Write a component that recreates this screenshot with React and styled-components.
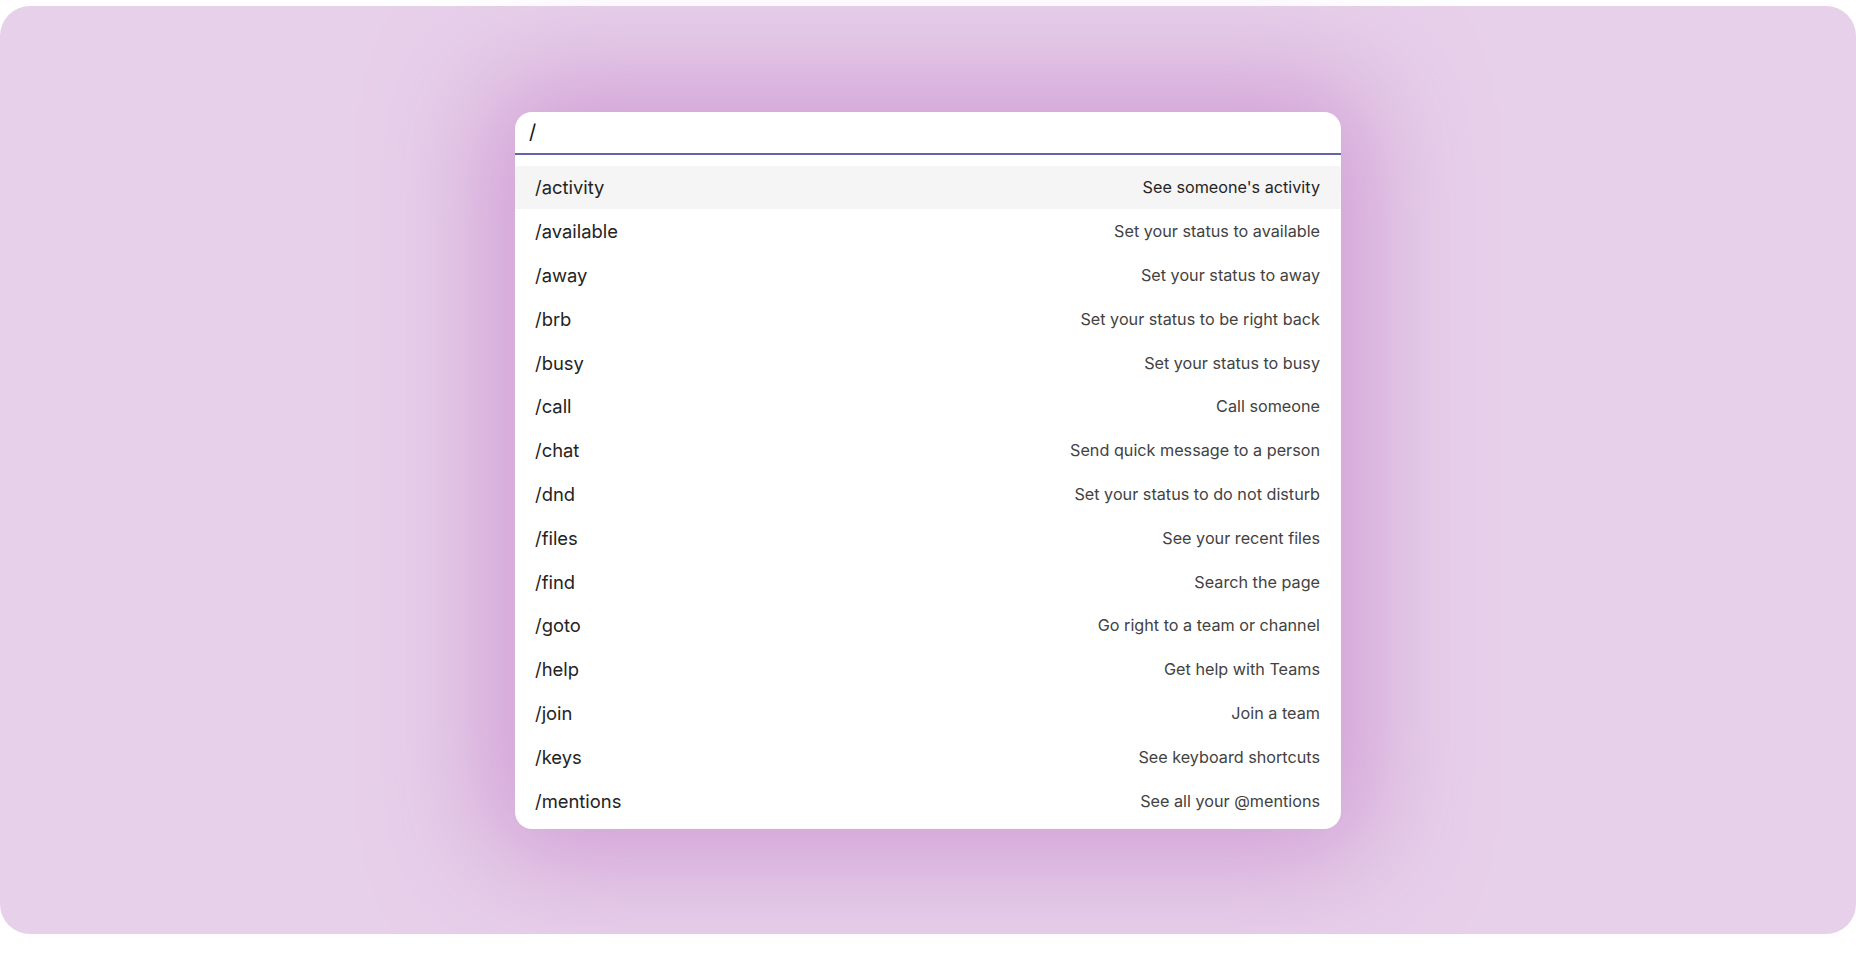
import React from 'react'
import styled, { createGlobalStyle } from 'styled-components'

const GlobalStyle = createGlobalStyle`
    html, body {
        margin: 0;
        padding: 0;
        background: #ffffff;
        font-family: Inter, "Noto Sans", sans-serif;
    }
`;

const Frame = styled.div`
    margin-top: 6px;
    height: 928px;
    border-radius: 30px;
    background: #e7d0ea;
    display: flex;
    align-items: center;
    justify-content: center;
`;

const Panel = styled.div`
    width: 826px;
    height: 717px;
    box-sizing: border-box;
    background: #ffffff;
    border-radius: 17px;
    overflow: hidden;
    display: flex;
    flex-direction: column;
    box-shadow: 0 0 110px 30px rgba(200, 140, 205, 0.75);
`;

const Input = styled.div`
    height: 41px;
    flex-shrink: 0;
    display: flex;
    align-items: center;
    padding: 0 14px;
    font-size: 20px;
    color: #111111;
    border-bottom: 2px solid #6264a7;
`;

const List = styled.div`
    display: flex;
    flex-direction: column;
    padding-top: 11px;
`;

const Row = styled.div`
    height: 43.8px;
    display: flex;
    align-items: center;
    justify-content: space-between;
    padding: 0 21px 0 20px;
    background: ${props => props.active ? '#f5f5f5' : 'transparent'};
`;

const Command = styled.span`
    font-size: 18.4px;
    color: #242424;
`;

const Hint = styled.span`
    font-size: 16.2px;
    color: ${props => props.active ? '#242424' : '#424242'};
`;

const commands = [
    ['/activity', "See someone's activity"],
    ['/available', 'Set your status to available'],
    ['/away', 'Set your status to away'],
    ['/brb', 'Set your status to be right back'],
    ['/busy', 'Set your status to busy'],
    ['/call', 'Call someone'],
    ['/chat', 'Send quick message to a person'],
    ['/dnd', 'Set your status to do not disturb'],
    ['/files', 'See your recent files'],
    ['/find', 'Search the page'],
    ['/goto', 'Go right to a team or channel'],
    ['/help', 'Get help with Teams'],
    ['/join', 'Join a team'],
    ['/keys', 'See keyboard shortcuts'],
    ['/mentions', 'See all your @mentions'],
];

export default function App() {
    return (
        <>
            <GlobalStyle />
            <Frame>
                <Panel>
                    <Input>/</Input>
                    <List>
                        {commands.map(([cmd, hint], i) => (
                            <Row key={cmd} active={i === 0}>
                                <Command>{cmd}</Command>
                                <Hint active={i === 0}>{hint}</Hint>
                            </Row>
                        ))}
                    </List>
                </Panel>
            </Frame>
        </>
    )
}
